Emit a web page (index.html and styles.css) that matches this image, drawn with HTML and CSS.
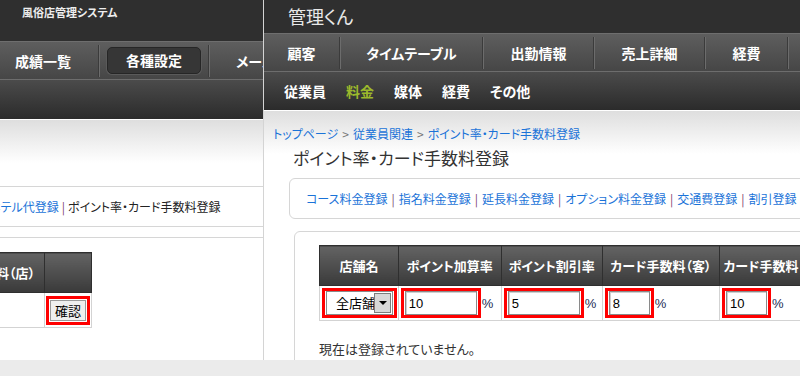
FILE: index.html
```html
<!DOCTYPE html>
<html lang="ja">
<head>
    <meta charset="UTF-8">
    <meta name="viewport" content="width=device-width, initial-scale=1.0">
    <title>ポイント率・カード手数料登録</title>
    <link rel="stylesheet" href="styles.css">
</head>

<body>
    <div class="desk">
        <!-- back window -->
        <div class="window window-back">
            <div class="back-head"><span class="brand-small">風俗店管理システム</span></div>
            <nav class="nav-main back-nav">
                <a class="nav-item">成績一覧</a>
                <span class="nav-sep"></span>
                <a class="nav-item current">各種設定</a>
                <span class="nav-sep"></span>
                <a class="nav-item">メール</a>
            </nav>
            <div class="nav-sub back-sub"></div>
            <div class="content back-content">
                <div class="tab-box back-tabs">
                    <a class="link">ホテル代登録</a><span class="bar">|</span><span class="here">ポイント率・カード手数料登録</span>
                </div>
                <div class="table-box back-table-box">
                    <table class="grid back-grid">
                        <tr>
                            <th class="col-fee">カード手数料（店）</th>
                            <th class="col-btn"></th>
                        </tr>
                        <tr>
                            <td></td>
                            <td class="btn-cell"><span class="mark"><button class="btn">確認</button></span></td>
                        </tr>
                    </table>
                </div>
            </div>
        </div>

        <!-- front window -->
        <div class="window window-front">
            <div class="front-head">管理くん</div>
            <nav class="nav-main front-nav">
                <a class="nav-item">顧客</a>
                <span class="nav-sep"></span>
                <a class="nav-item">タイムテーブル</a>
                <span class="nav-sep"></span>
                <a class="nav-item">出勤情報</a>
                <span class="nav-sep"></span>
                <a class="nav-item">売上詳細</a>
                <span class="nav-sep"></span>
                <a class="nav-item">経費</a>
                <span class="nav-sep"></span>
                <a class="nav-item">顧客管理</a>
            </nav>
            <nav class="nav-sub front-sub">
                <a class="sub-item">従業員</a>
                <a class="sub-item active">料金</a>
                <a class="sub-item">媒体</a>
                <a class="sub-item">経費</a>
                <a class="sub-item">その他</a>
            </nav>
            <div class="content">
                <div class="breadcrumb">
                    <a class="link">トップページ</a><span class="gt">&gt;</span><a class="link">従業員関連</a><span class="gt">&gt;</span><a class="link">ポイント率・カード手数料登録</a>
                </div>
                <h1 class="page-title">ポイント率・カード手数料登録</h1>
                <div class="tab-box">
                    <a class="link">コース料金登録</a><span class="bar">|</span>
                    <a class="link">指名料金登録</a><span class="bar">|</span>
                    <a class="link">延長料金登録</a><span class="bar">|</span>
                    <a class="link">オプション料金登録</a><span class="bar">|</span>
                    <a class="link">交通費登録</a><span class="bar">|</span>
                    <a class="link">割引登録</a><span class="bar">|</span>
                    <a class="link">オプション登録</a>
                </div>
                <div class="table-box">
                    <table class="grid front-grid">
                        <tr>
                            <th class="c-shop">店舗名</th>
                            <th class="c-add">ポイント加算率</th>
                            <th class="c-off">ポイント割引率</th>
                            <th class="c-cust">カード手数料（客）</th>
                            <th class="c-shop-fee">カード手数料（店）</th>
                        </tr>
                        <tr>
                            <td>
                                <span class="mark">
                                    <span class="select"><span class="select-text">全店舗</span><span class="select-btn"><i class="arrow"></i></span></span>
                                </span>
                            </td>
                            <td><span class="mark"><input class="rate" type="text" value="10"></span><span class="pct">%</span></td>
                            <td><span class="mark"><input class="rate" type="text" value="5"></span><span class="pct">%</span></td>
                            <td><span class="mark"><input class="rate short" type="text" value="8"></span><span class="pct">%</span></td>
                            <td><span class="mark"><input class="rate short" type="text" value="10"></span><span class="pct">%</span></td>
                        </tr>
                    </table>
                    <p class="empty">現在は登録されていません。</p>
                </div>
            </div>
        </div>
    </div>
</body>
</html>
```

FILE: styles.css
```css
* {
    box-sizing: border-box;
}

body {
    margin: 0;
    font-family: "Noto Sans CJK JP", "Noto Sans", sans-serif;
    font-feature-settings: "palt";
    color: #333;
}

.desk {
    position: relative;
    width: 800px;
    height: 376px;
    overflow: hidden;
    background-color: #ebebeb;
}

.window {
    position: absolute;
    top: 0;
    height: 360px;
    overflow: hidden;
    background-color: #fff;
}

.window-back {
    left: 0;
    width: 264px;
}

.window-front {
    left: 264px;
    width: 536px;
    box-shadow: -1px 0 0 #d4d4d4;
}

/* headers */
.back-head {
    height: 41px;
    padding: 6px 0 0 22px;
    background-color: #2f2f2f;
}

.brand-small {
    display: block;
    font-size: 11px;
    line-height: 13px;
    font-weight: bold;
    color: #eee;
}

.front-head {
    height: 33px;
    padding-left: 24px;
    background-color: #2f2f2f;
    color: #e8e8e8;
    font-size: 18px;
    line-height: 32px;
}

/* navigation */
.nav-main {
    display: flex;
    align-items: center;
    height: 38px;
    border-top: 1px solid #6e6e6e;
    background: linear-gradient(#5e5e5e, #464646);
    white-space: nowrap;
}

.nav-item {
    flex: none;
    color: #fff;
    font-size: 14px;
    font-weight: bold;
    text-align: center;
}

.nav-sep {
    flex: none;
    width: 2px;
    height: 32px;
    border-left: 1px solid #3b3b3b;
    border-right: 1px solid #6c6c6c;
}

.back-nav .nav-item:nth-of-type(1) {
    width: 98px;
    padding-left: 15px;
    text-align: left;
}

.back-nav .current {
    width: 94px;
    height: 27px;
    margin: 0 7px;
    line-height: 25px;
    background-color: #363636;
    border: 1px solid #262626;
    border-radius: 5px;
    box-shadow: 0 0 0 1px #5a5a5a;
}

.back-nav .nav-item:nth-of-type(3) {
    margin-left: 26px;
}

.front-nav .nav-item:nth-of-type(1) { width: 75px; }
.front-nav .nav-item:nth-of-type(2) { width: 141px; }
.front-nav .nav-item:nth-of-type(3) { width: 109px; }
.front-nav .nav-item:nth-of-type(4) { width: 109px; }
.front-nav .nav-item:nth-of-type(5) { width: 81px; }
.front-nav .nav-item:nth-of-type(6) { width: 100px; }

.nav-sub {
    display: flex;
    align-items: center;
    gap: 20px;
    height: 39px;
    padding-left: 20px;
    border-top: 1px solid #6d6d6d;
    background: linear-gradient(#4b4b4b, #2b2b2b);
}

.back-sub {
    height: 40px;
}

.sub-item {
    color: #fff;
    font-size: 14px;
    font-weight: bold;
    white-space: nowrap;
}

.sub-item.active {
    color: #9cb92c;
}

/* content */
.content {
    height: 260px;
    background: linear-gradient(#fff 0, #fff 1px, #dedede 1px, #fff 44px) no-repeat;
}

.link {
    color: #1a73d8;
    text-decoration: none;
}

.breadcrumb {
    padding: 16px 0 0 9px;
    font-size: 12px;
    line-height: 16px;
    white-space: nowrap;
}

.gt {
    margin: 0 4px;
    color: #777;
}

.page-title {
    margin: 5px 0 0 29px;
    font-size: 17px;
    font-weight: normal;
    line-height: 22px;
    color: #333;
    white-space: nowrap;
}

.tab-box {
    display: flex;
    align-items: center;
    height: 41px;
    margin: 9px -30px 0 25px;
    padding-left: 16px;
    border: 1px solid #d6d6d6;
    border-radius: 6px;
    font-size: 12px;
    white-space: nowrap;
}

.bar {
    margin: 0 4px;
    color: #7b3d6d;
}

.table-box {
    height: 200px;
    margin: 12px -30px 0 30px;
    padding: 13px 0 0 24px;
    border: 1px solid #d6d6d6;
    border-radius: 6px;
}

/* tables */
.grid {
    border-collapse: collapse;
    table-layout: fixed;
}

.grid th {
    height: 40px;
    padding: 0;
    border: 1px solid #2f2f2f;
    background: linear-gradient(#636363, #3a3a3a);
    color: #fff;
    font-size: 13px;
    font-weight: bold;
    white-space: nowrap;
    overflow: hidden;
}

.grid td {
    height: 35px;
    padding: 0 0 0 2px;
    border: 1px solid #d3d3d3;
    white-space: nowrap;
    vertical-align: middle;
}

.c-shop { width: 79px; }
.c-add { width: 104px; }
.c-off { width: 102px; }
.c-cust { width: 120px; }
.c-shop-fee { width: 110px; }

.mark {
    display: inline-block;
    vertical-align: middle;
    padding: 0 1px;
    border: 3px solid #f00;
    line-height: 0;
}

.rate {
    width: 72px;
    height: 24px;
    padding: 0 3px;
    border: 1px solid #8a8a8a;
    box-shadow: inset 1px 1px 0 #cfcfcf;
    font-family: "Liberation Sans", sans-serif;
    font-size: 13px;
    color: #000;
}

.rate.short {
    width: 41px;
}

.pct {
    margin-left: 1px;
    font-family: "Liberation Sans", sans-serif;
    font-size: 13px;
    color: #1d2b55;
    vertical-align: middle;
}

.select {
    display: inline-flex;
    align-items: center;
    width: 67px;
    height: 24px;
    border: 1px solid #8a8a8a;
    background-color: #fff;
}

.select-text {
    flex: 1;
    overflow: hidden;
    padding-left: 9px;
    font-size: 13px;
    line-height: 18px;
    color: #000;
    white-space: nowrap;
}

.select-btn {
    display: flex;
    align-items: center;
    justify-content: center;
    flex: none;
    width: 17px;
    height: 20px;
    margin-right: 1px;
    border: 1px solid #7c7c7c;
    background-color: #d8d8d8;
}

.arrow {
    width: 0;
    height: 0;
    border-top: 4px solid #000;
    border-left: 4px solid transparent;
    border-right: 4px solid transparent;
}

.empty {
    margin: 20px 0 0;
    font-size: 13px;
    line-height: 16px;
    color: #333;
}

/* back window content */
.back-content {
    padding-top: 67px;
}

.back-tabs {
    margin: 0 -200px 0 -20px;
    padding-left: 0;
}

.back-tabs .link {
    margin-left: 8px;
}

.back-tabs .bar {
    margin: 0 3px;
}

.here {
    color: #222;
}

.back-table-box {
    margin: 10px -200px 0 -20px;
    padding: 14px 0 0 0;
}

.back-grid {
    margin-left: -57px;
}

.col-fee { width: 120px; }
.col-btn { width: 47px; }

.btn-cell {
    text-align: center;
}

.grid td.btn-cell {
    padding: 0;
}

.btn {
    width: 36px;
    height: 21px;
    margin: 1px 0;
    padding: 0;
    border: 1px solid #9a9a9a;
    background-color: #efefef;
    font-family: "Noto Sans CJK JP", sans-serif;
    font-size: 13px;
    line-height: 19px;
    color: #000;
}
```
